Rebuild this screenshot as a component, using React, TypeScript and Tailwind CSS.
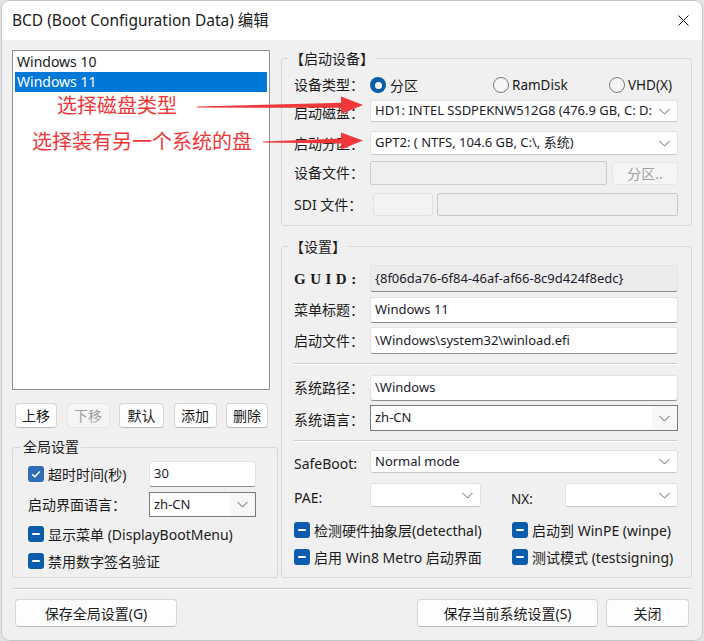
import React from 'react';

const Chevron = () => (
  <svg width="11" height="7" viewBox="0 0 11 7" className="shrink-0">
    <path d="M0.5 1 L5.5 6 L10.5 1" fill="none" stroke="#606060" strokeWidth="1" />
  </svg>
);

function Select({ value, className = '' }: { value?: string; className?: string }) {
  return (
    <div className={`flex items-center bg-white rounded-[3px] border border-[#e2e2e2] border-b-[#c8c8c8] pl-[4px] pr-[7px] ${className}`}>
      <span className="flex-1 truncate text-[13px] text-[#1b1b2b]">{value}</span>
      <Chevron />
    </div>
  );
}

// combo box with the darker frame (系统语言 / 启动界面语言)
function Combo({ value, className = '' }: { value: string; className?: string }) {
  return (
    <div className={`flex items-stretch bg-white border border-[#7a7a7a] ${className}`}>
      <span className="flex-1 flex items-center pl-[4px] text-[13px] text-[#1b1b2b]">{value}</span>
      <span className="w-[25px] flex items-center justify-center bg-[#f7f7f7]">
        <Chevron />
      </span>
    </div>
  );
}

function TextBox({ value, className = '', readOnly = false }: { value?: string; className?: string; readOnly?: boolean }) {
  return (
    <div
      className={`flex items-center rounded-[3px] border border-[#e3e3e3] border-b-[#8f8f8f] px-[4px] text-[13px] text-[#1b1b2b] ${readOnly ? 'bg-[#ececec]' : 'bg-white'} ${className}`}
    >
      {value}
    </div>
  );
}

function Check({ mixed = false }: { mixed?: boolean }) {
  return (
    <span className={`w-[16px] h-[16px] rounded-[3px] flex items-center justify-center shrink-0 ${mixed ? 'bg-[#0b5cad]' : 'bg-[#2f6db5]'}`}>
      {mixed ? (
        <span className="w-[8px] h-[2px] rounded-[1px] bg-white" />
      ) : (
        <svg width="12" height="12" viewBox="0 0 12 12">
          <path d="M2.2 6.3 L4.8 8.8 L9.8 3.4" fill="none" stroke="white" strokeWidth="1.4" />
        </svg>
      )}
    </span>
  );
}

function Radio({ checked = false }: { checked?: boolean }) {
  return checked ? (
    <span className="w-[16px] h-[16px] rounded-full bg-[#0b5cad] flex items-center justify-center shrink-0">
      <span className="w-[7px] h-[7px] rounded-full bg-white" />
    </span>
  ) : (
    <span className="w-[16px] h-[16px] rounded-full border border-[#7a7a7a] bg-[#f6f6f6] shrink-0" />
  );
}

function Btn({ children, className = '', disabled = false }: { children: React.ReactNode; className?: string; disabled?: boolean }) {
  return (
    <div
      className={`flex items-center justify-center rounded-[4px] border text-[14px] ${
        disabled
          ? 'bg-[#f5f5f5] border-[#e5e5e5] text-[#a0a0a0]'
          : 'bg-[#fdfdfd] border-[#d6d6d6] border-b-[#bdbdbd] text-[#1a1a1a]'
      } ${className}`}
    >
      {children}
    </div>
  );
}

const Label = ({ children, className = '' }: { children: React.ReactNode; className?: string }) => (
  <span className={`w-[76px] shrink-0 text-[14px] leading-[18px] whitespace-nowrap ${className}`}>{children}</span>
);

const Sep = () => <div className="h-[2px] border-t border-[#cfcfcf] border-b border-b-white" />;

export default function App() {
  return (
    <div className="relative w-[704px] h-[641px] overflow-hidden bg-[#dfe3e8] font-['Noto_Sans','Noto_Sans_CJK_SC',sans-serif] text-[#1a1a1a]">
      <div className="ml-[2px] mt-[1px] w-[700px] h-[639px] rounded-[8px] overflow-hidden flex flex-col shadow-[0_0_0_1px_rgba(0,0,0,0.12)]">
        {/* title bar */}
        <div className="h-[39px] shrink-0 bg-white flex items-center pl-[10px] pr-[13px]">
          <span className="flex-1 text-[15.5px]">BCD (Boot Configuration Data) 编辑</span>
          <svg width="11" height="11" viewBox="0 0 11 11">
            <path d="M0.5 0.5 L10.5 10.5 M10.5 0.5 L0.5 10.5" stroke="#111" strokeWidth="1" />
          </svg>
        </div>

        <div className="flex-1 bg-[#f0f0f0] px-[10px] pt-[10px] flex flex-col">
          <div className="flex gap-[3px]">
            {/* left column */}
            <div className="w-[266px] flex flex-col">
              <div className="w-[258px] h-[340px] bg-white border border-[#8e8f94] pt-[1px] px-[2px]">
                <div className="h-[20px] px-[2px] text-[14px] leading-[20px]">Windows 10</div>
                <div className="h-[20px] px-[2px] text-[14px] leading-[20px] bg-[#0078d7] text-white">Windows 11</div>
              </div>

              <div className="mt-[13px] h-[25px] w-[258px] flex justify-between pl-[3px] pr-[2px]">
                <Btn className="w-[42px]">上移</Btn>
                <Btn className="w-[43px]" disabled>下移</Btn>
                <Btn className="w-[45px]">默认</Btn>
                <Btn className="w-[43px]">添加</Btn>
                <Btn className="w-[42px]">删除</Btn>
              </div>

              <div className="relative mt-[19px] h-[131px] w-[266px] border border-[#d8d8d8] rounded-[3px] pl-[15px] pt-[13px]">
                <span className="absolute left-[8px] -top-[10px] px-[2px] bg-[#f0f0f0] text-[14px] leading-[18px]">全局设置</span>
                <div className="h-[26px] flex items-center">
                  <div className="w-[121px] flex items-center gap-[4px]">
                    <Check />
                    <span className="text-[14px]">超时时间(秒)</span>
                  </div>
                  <TextBox value="30" className="w-[107px] h-[26px]" />
                </div>
                <div className="mt-[5px] h-[25px] flex items-center">
                  <span className="w-[121px] text-[14px]">启动界面语言：</span>
                  <Combo value="zh-CN" className="w-[107px] h-[25px]" />
                </div>
                <div className="mt-[8px] h-[18px] flex items-center gap-[4px]">
                  <Check mixed />
                  <span className="text-[14px]">显示菜单 (DisplayBootMenu)</span>
                </div>
                <div className="mt-[9px] h-[18px] flex items-center gap-[4px]">
                  <Check mixed />
                  <span className="text-[14px]">禁用数字签名验证</span>
                </div>
              </div>
            </div>

            {/* right column */}
            <div className="w-[411px] flex flex-col">
              {/* 启动设备 */}
              <div className="relative mt-[8px] h-[168px] border border-[#d8d8d8] rounded-[3px] pl-[12px] pr-[13px] pt-[16px]">
                <span className="absolute left-[6px] -top-[9px] px-[2px] bg-[#f0f0f0] text-[14px] leading-[18px]">【启动设备】</span>
                <div className="h-[20px] flex items-center">
                  <Label>设备类型：</Label>
                  <div className="w-[123px] flex items-center gap-[4px]">
                    <Radio checked />
                    <span className="text-[14px]">分区</span>
                  </div>
                  <div className="w-[116px] flex items-center gap-[3px]">
                    <Radio />
                    <span className="text-[13.5px]">RamDisk</span>
                  </div>
                  <div className="flex items-center gap-[3px]">
                    <Radio />
                    <span className="text-[13.5px]">VHD(X)</span>
                  </div>
                </div>
                <div className="mt-[5px] h-[22px] flex items-center">
                  <Label className="pt-[3px]">启动磁盘：</Label>
                  <Select value="HD1: INTEL SSDPEKNW512G8 (476.9 GB, C: D:" className="flex-1 h-[22px]" />
                </div>
                <div className="mt-[9px] h-[24px] flex items-center">
                  <Label className="pt-[2px]">启动分区：</Label>
                  <Select value="GPT2: ( NTFS, 104.6 GB, C:\, 系统)" className="flex-1 h-[24px]" />
                </div>
                <div className="mt-[6px] h-[24px] flex items-center">
                  <Label>设备文件：</Label>
                  <div className="flex-1 h-[24px] bg-[#efefef] border border-[#cccccc] rounded-[2px]" />
                  <Btn className="ml-[5px] w-[66px] h-[23px]" disabled>分区..</Btn>
                </div>
                <div className="mt-[8px] h-[23px] flex items-center">
                  <Label>SDI 文件：</Label>
                  <div className="ml-[3px] w-[60px] h-[23px] bg-[#f3f3f3] border border-[#e2e2e2] rounded-[3px]" />
                  <div className="ml-[4px] flex-1 h-[23px] bg-[#efefef] border border-[#c8c8c8] rounded-[2px]" />
                </div>
              </div>

              {/* 设置 */}
              <div className="relative mt-[20px] h-[332px] border border-[#d8d8d8] rounded-[3px] pl-[12px] pr-[13px] pt-[18px]">
                <span className="absolute left-[6px] -top-[9px] px-[2px] bg-[#f0f0f0] text-[14px] leading-[18px]">【设置】</span>
                <div className="h-[27px] flex items-center">
                  <Label className="font-['Liberation_Serif',serif] font-bold text-[15px] tracking-[4.5px]">GUID:</Label>
                  <TextBox readOnly value="{8f06da76-6f84-46af-af66-8c9d424f8edc}" className="flex-1 h-[27px]" />
                </div>
                <div className="mt-[5px] h-[26px] flex items-center">
                  <Label>菜单标题：</Label>
                  <TextBox value="Windows 11" className="flex-1 h-[26px]" />
                </div>
                <div className="mt-[4px] h-[27px] flex items-center">
                  <Label>启动文件：</Label>
                  <TextBox value="\Windows\system32\winload.efi" className="flex-1 h-[27px]" />
                </div>
                <div className="mt-[9px]">
                  <Sep />
                </div>
                <div className="mt-[10px] h-[26px] flex items-center">
                  <Label>系统路径：</Label>
                  <TextBox value="\Windows" className="flex-1 h-[26px]" />
                </div>
                <div className="mt-[4px] h-[26px] flex items-center">
                  <Label className="pt-[4px]">系统语言：</Label>
                  <Combo value="zh-CN" className="flex-1 h-[26px]" />
                </div>
                <div className="mt-[9px]">
                  <Sep />
                </div>
                <div className="mt-[8px] h-[23px] flex items-end">
                  <Label className="text-[13.5px] leading-[16px]">SafeBoot:</Label>
                  <Select value="Normal mode" className="flex-1 h-[23px]" />
                </div>
                <div className="mt-[10px] h-[24px] flex items-end">
                  <Label className="text-[13.5px] leading-[16px]">PAE:</Label>
                  <Select className="w-[111px] h-[24px]" />
                  <span className="ml-[30px] w-[54px] text-[13.5px] leading-[16px]">NX:</span>
                  <Select className="flex-1 h-[24px]" />
                </div>
                <div className="mt-[14px] h-[18px] flex items-center">
                  <div className="w-[218px] flex items-center gap-[4px]">
                    <Check mixed />
                    <span className="text-[14px]">检测硬件抽象层(detecthal)</span>
                  </div>
                  <div className="flex items-center gap-[4px]">
                    <Check mixed />
                    <span className="text-[14px]">启动到 WinPE (winpe)</span>
                  </div>
                </div>
                <div className="mt-[9px] h-[18px] flex items-center">
                  <div className="w-[218px] flex items-center gap-[4px]">
                    <Check mixed />
                    <span className="text-[14px]">启用 Win8 Metro 启动界面</span>
                  </div>
                  <div className="flex items-center gap-[4px]">
                    <Check mixed />
                    <span className="text-[14px]">测试模式 (testsigning)</span>
                  </div>
                </div>
              </div>
            </div>
          </div>

          <div className="mt-[10px]">
            <Sep />
          </div>

          <div className="mt-[9px] h-[28px] flex px-[3px]">
            <Btn className="w-[162px] h-[28px]">保存全局设置(G)</Btn>
            <div className="flex-1" />
            <Btn className="w-[181px] h-[28px]">保存当前系统设置(S)</Btn>
            <Btn className="ml-[8px] w-[83px] h-[28px]">关闭</Btn>
          </div>
        </div>
      </div>

      {/* red annotations drawn over the screenshot */}
      <span className="absolute left-[57px] top-[95px] text-[20px] leading-[22px] text-[#f0383a]">选择磁盘类型</span>
      <span className="absolute left-[32px] top-[131px] text-[20px] leading-[22px] text-[#f0383a]">选择装有另一个系统的盘</span>
      <svg className="absolute left-0 top-0 pointer-events-none" width="704" height="641" viewBox="0 0 704 641">
        <polygon points="197,106.4 343,102.8 343,107.8 197,107.6" fill="#f0383a" />
        <polygon points="341,96.5 363,105 341,114" fill="#f0383a" />
        <polygon points="263,141.4 343,138.4 343,143.4 263,142.6" fill="#f0383a" />
        <polygon points="341,132.5 363,140.5 341,149.5" fill="#f0383a" />
      </svg>
    </div>
  );
}
